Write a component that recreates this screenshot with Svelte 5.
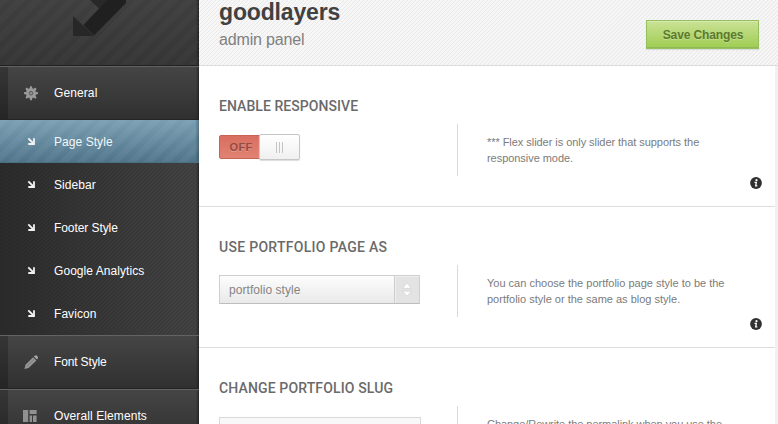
<script>
  const subs = ['Page Style', 'Sidebar', 'Footer Style', 'Google Analytics', 'Favicon'];
  const options = [
    { title: 'ENABLE RESPONSIVE', kind: 'toggle', lines: ['*** Flex slider is only slider that supports the', 'responsive mode.'] },
    { title: 'USE PORTFOLIO PAGE AS', kind: 'select', lines: ['You can choose the portfolio page style to be the', 'portfolio style or the same as blog style.'] },
    { title: 'CHANGE PORTFOLIO SLUG', kind: 'input', lines: ['Change/Rewrite the permalink when you use the'] }
  ];
</script>

{#snippet head(label, icon)}
  <div class="head">
    <span class="tab"></span>
    <svg class="hicon" width="16" height="16" viewBox="0 0 16 16">
      {#if icon === 'gear'}
        <g fill="#9b9b9b">
          <circle cx="8" cy="8.2" r="5" />
          {#each [0, 45, 90, 135, 180, 225, 270, 315] as a}
            <path d="M6.5 4 L7.1 1.2 H8.9 L9.5 4Z" transform="rotate({a} 8 8.2)" />
          {/each}
        </g>
        <circle cx="8" cy="8.2" r="1.9" fill="#8d8d8d" stroke="#5c5c5c" stroke-width="1" />
      {:else if icon === 'pencil'}
        <path d="M1.4 15 L2.5 10.8 L10 3.2 L13.4 6.5 L5.6 14Z" fill="#959595" />
        <path d="M10.8 2.5 L12 1.4 Q13.2 .8 14.3 1.9 Q15.5 3 14.8 4.4 L14 5.5Z" fill="#a4a4a4" />
        <path d="M4 12.3 L11.4 5" stroke="#777" stroke-width=".8" />
      {:else}
        <path d="M0 2H5.2V14H0ZM6.6 2H13.6V6H6.6ZM6.6 7.4H9V14H6.6ZM10 7.4H13.6V14H10Z" fill="#909090" />
      {/if}
    </svg>
    <span class="label">{label}</span>
  </div>
{/snippet}

<div class="page">
  <aside>
    <div class="logo">
      <svg width="198" height="65" viewBox="0 0 198 65">
        <path d="M90 0H108L99 8.5Z" fill="#292929" />
        <path d="M107 0H126V3L94 35.5L83.5 25Z" fill="#202020" />
        <path d="M73 16L94 36H73Z" fill="#272727" />
      </svg>
    </div>
    {@render head('General', 'gear')}
    <nav>
      {#each subs as s, i}
        <div class="sub" class:active={i === 0}>
          <svg width="9" height="9" viewBox="0 0 9 9">
            <path d="M1.3 1.3L6 6" stroke="#f2f2f2" stroke-width="1.8" />
            <path d="M7 1.3V7H1.3" fill="none" stroke="#f2f2f2" stroke-width="1.8" />
          </svg>
          <span class="label">{s}</span>
        </div>
      {/each}
    </nav>
    {@render head('Font Style', 'pencil')}
    {@render head('Overall Elements', 'blocks')}
  </aside>
  <main>
    <header>
      <div class="brand">
        <h1>goodlayers</h1>
        <p>admin panel</p>
      </div>
      <button class="save">Save Changes</button>
    </header>
    <div class="body">
      {#each options as o}
        <section class={o.kind + '-row'}>
          <div class="left">
            <h2>{o.title}</h2>
            {#if o.kind === 'toggle'}
              <div class="toggle"><span class="off">OFF</span><span class="knob"><i></i><i></i><i></i></span></div>
            {:else if o.kind === 'select'}
              <div class="select">
                <span class="value">portfolio style</span>
                <span class="arrows">
                  <svg width="12" height="16" viewBox="0 0 12 16">
                    <path d="M6 1L10.3 6.3H1.7ZM1.7 9.2H10.3L6 14.2Z" fill="#fff" stroke="#cfcfcf" stroke-width=".6" />
                  </svg>
                </span>
              </div>
            {:else}
              <div class="input"></div>
            {/if}
          </div>
          <div class="desc">
            <div>{#each o.lines as l}<p>{l}</p>{/each}</div>
          </div>
          <svg class="info" width="12" height="12" viewBox="0 0 12 12">
            <circle cx="6" cy="6" r="5.9" fill="#303030" />
            <circle cx="6.5" cy="3.2" r="1.1" fill="#fff" />
            <path d="M4.5 5.3H6.3L5.7 8.8H7.3" fill="none" stroke="#fff" stroke-width="1.3" />
          </svg>
        </section>
      {/each}
    </div>
  </main>
</div>

<style>
  :global(body) { margin: 0; overflow: hidden; }
  .page {
    display: flex; width: 778px; height: 424px; overflow: hidden;
    font-family: "Liberation Sans", Arial, sans-serif; background: #fff;
  }
  h1, h2, p { margin: 0; }
  aside { width: 199px; flex: none; background: #303030; }
  .logo {
    height: 65px; border-bottom: 1px solid #202020;
    background:
      linear-gradient(to left, rgba(20, 20, 20, .6), transparent 3px),
      repeating-linear-gradient(135deg, rgba(255, 255, 255, .02) 0 5px, transparent 7px 11px, rgba(255, 255, 255, .02) 12px),
      linear-gradient(#3f3f3f, #353535);
  }
  .logo svg { display: block; }
  .head {
    height: 54px; box-sizing: border-box; display: flex; align-items: center;
    border-top: 1px solid #636363; border-bottom: 1px solid #232323;
    background: linear-gradient(to left, rgba(20, 20, 20, .6), transparent 3px), linear-gradient(#454545, #303030);
  }
  .tab { width: 8px; height: 52px; background: linear-gradient(#363636, #252525); }
  .hicon { margin-left: 15px; margin-right: 15px; }
  .label { font-size: 12px; line-height: 16px; color: #fff; white-space: nowrap; letter-spacing: .06px; }
  .head .label { letter-spacing: 0; }
  .head:nth-last-child(2) .label { letter-spacing: -.15px; }
  .head:last-child .label { letter-spacing: .1px; }
  .head:nth-child(2) .label { letter-spacing: .1px; }
  nav {
    height: 215px;
    background:
      linear-gradient(to left, rgba(20, 20, 20, .6), transparent 3px),
      repeating-linear-gradient(135deg, rgba(0, 0, 0, .12) 0 1px, transparent 1px 2.83px),
      linear-gradient(to right, #2b2b2b, #434343);
  }
  .sub { height: 43px; display: flex; align-items: center; gap: 18px; padding-left: 27px; }
  .active {
    background:
      linear-gradient(to left, rgba(30, 50, 60, .4), transparent 4px),
      repeating-linear-gradient(135deg, rgba(255, 255, 255, .045) 0 5px, transparent 7px 11px, rgba(255, 255, 255, .045) 12px),
      linear-gradient(#7a9fb3, #4e7388);
    box-shadow: inset 0 -1px #4a6e82;
  }
  .active .label { color: #f2f7f9; }
  .sub:nth-child(3) .label { letter-spacing: -.08px; }
  main { flex: 1; min-width: 0; display: flex; flex-direction: column; }
  header {
    height: 66px; flex: none; box-sizing: border-box; border-bottom: 1px solid #dcdcdc;
    display: flex; justify-content: space-between; padding: 0 19px 0 20px;
    background: repeating-linear-gradient(135deg, #e9e9e9 0 .9px, #f7f7f7 1.4px 2.83px);
  }
  h1 { font-size: 23px; line-height: 24px; color: #414141; font-weight: bold; letter-spacing: -.15px; }
  .brand p { margin-top: 6px; font-size: 16px; line-height: 20px; letter-spacing: -.15px; color: #808080; }
  .save {
    margin: 20px 0 0; width: 113px; height: 29px; padding: 0 0 0 1px; border: 1px solid #96bf5e;
    background: linear-gradient(#cae295, #9fcc52); color: #5b7a2d;
    font: bold 12px "Liberation Sans", Arial, sans-serif; letter-spacing: -.13px;
    text-shadow: 0 1px rgba(255, 255, 255, .25);
    box-shadow: inset 0 1px #d6e9ae, inset 0 -1px #8dbb58, 0 1px 1px #ddd;
  }
  .body { flex: none; border-right: 3px solid #f1f1f1; }
  section {
    position: relative; height: 141px; box-sizing: border-box; display: flex;
    border-bottom: 1px solid #dedede;
  }
  .left { width: 258px; box-sizing: border-box; padding: 32px 0 0 20px; }
  h2 { font-family: Roboto, "Liberation Sans", sans-serif; font-size: 14px; line-height: 16px; font-weight: 500; color: #6a6a6a; white-space: nowrap; letter-spacing: .06px; }
  .select-row h2 { letter-spacing: .29px; }
  .input-row h2 { letter-spacing: .14px; }
  .toggle { margin-top: 20px; display: flex; height: 26px; width: 81px; align-items: center; }
  .off {
    width: 41px; height: 24px; box-sizing: border-box; border: 1px solid #c96355; border-radius: 2px 0 0 2px;
    background: linear-gradient(#d86f60, #e18273); color: #934b42; font-size: 11px; font-weight: bold;
    line-height: 23px; text-align: center; padding-left: 3px; letter-spacing: .3px; text-shadow: 0 1px rgba(255, 255, 255, .25);
  }
  .knob {
    width: 41px; margin-left: -1px; height: 26px; box-sizing: border-box; border: 1px solid #c6c6c6; border-radius: 2px;
    display: flex; align-items: center; justify-content: center; gap: 2px;
    background: linear-gradient(#fff, #f0f0f0); box-shadow: 0 1px 1px #ddd;
  }
  .knob i { width: 1px; height: 11px; background: #c4c4c4; }
  .select {
    margin-top: 20px; width: 201px; height: 29px; box-sizing: border-box; display: flex;
    border: 1px solid #cfcfcf; border-bottom-color: #bdbdbd; background: linear-gradient(#fdfdfd, #e9e9e9);
  }
  .value { flex: 1; padding-left: 9px; font-size: 12px; line-height: 29px; color: #858585; letter-spacing: .05px; }
  .arrows {
    width: 24px; display: flex; align-items: center; justify-content: center;
    border-left: 1px solid #cdcdcd; background: #e3e3e3; box-shadow: inset 1px 1px #eee;
  }
  .input { margin-top: 21px; width: 202px; height: 29px; box-sizing: border-box; border: 1px solid #d9d9d9; background: #f8f8f8; }
  .desc {
    margin-top: 58px; height: 52px; width: 310px; box-sizing: border-box; border-left: 1px solid #d9d9d9;
    padding: 10px 0 0 29px;
  }
  .desc p { font-size: 11px; line-height: 16px; color: #7b7b7b; white-space: nowrap; }
  .toggle-row .desc p { letter-spacing: -.05px; }
  .input-row .desc p { letter-spacing: -.05px; }
  .info { position: absolute; right: 13px; bottom: 17px; }
</style>
